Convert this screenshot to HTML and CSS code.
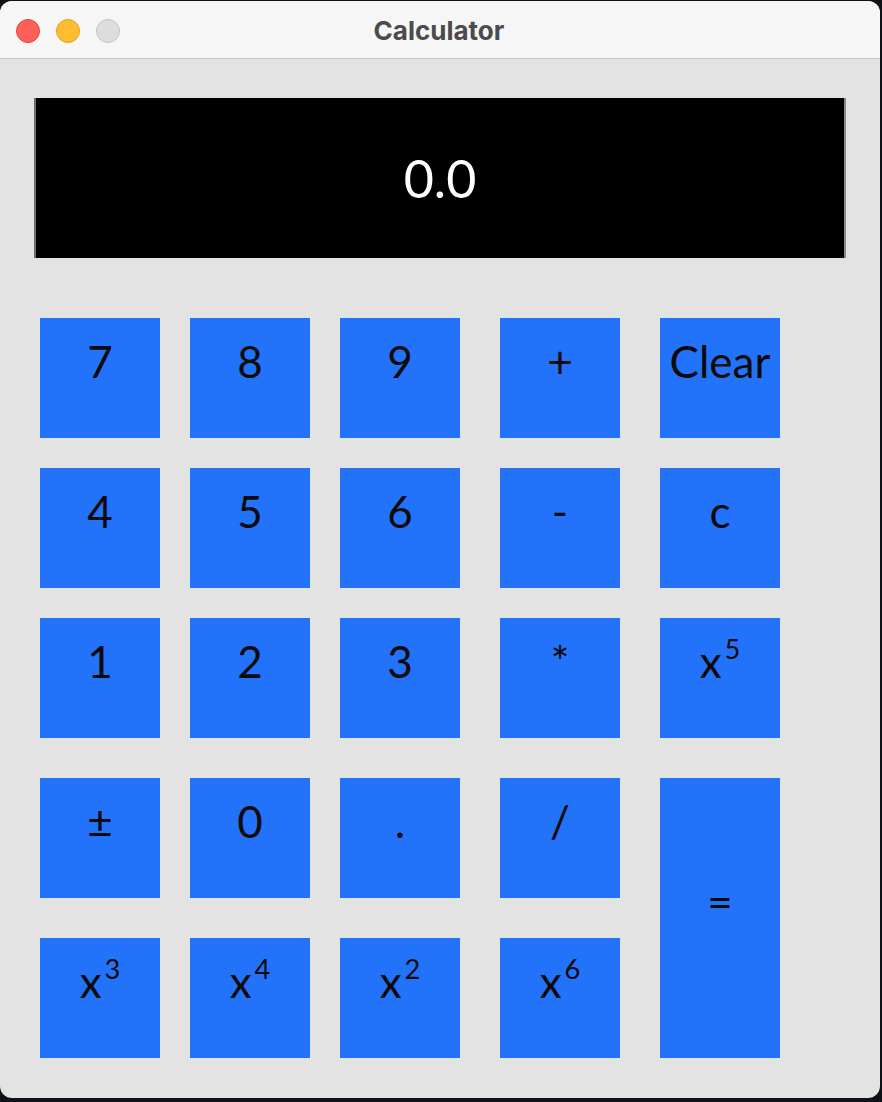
FILE: index.html
```html
<!DOCTYPE html>
<html lang="en">

<head>
  <meta charset="UTF-8">
  <meta name="viewport" content="width=device-width, initial-scale=1.0">
  <title>Calculator</title>
  <link rel="stylesheet" href="styles.css">
</head>

<body>
  <div class="window">

    <div class="titlebar">
      <div class="lights">
        <span class="light red"></span>
        <span class="light yellow"></span>
        <span class="light gray"></span>
      </div>
      <div class="title">Calculator</div>
      <div></div>
    </div>

    <div class="content">
      <div class="display" id="display">0.0</div>

      <div class="keys">
        <button class="key">7</button>
        <button class="key">8</button>
        <button class="key">9</button>
        <button class="key">+</button>
        <button class="key">Clear</button>

        <button class="key">4</button>
        <button class="key">5</button>
        <button class="key">6</button>
        <button class="key">-</button>
        <button class="key">c</button>

        <button class="key">1</button>
        <button class="key">2</button>
        <button class="key">3</button>
        <button class="key">*</button>
        <button class="key">x<sup>5</sup></button>

        <button class="key">±</button>
        <button class="key">0</button>
        <button class="key">.</button>
        <button class="key">/</button>
        <button class="key equals">=</button>

        <button class="key">x<sup>3</sup></button>
        <button class="key">x<sup>4</sup></button>
        <button class="key">x<sup>2</sup></button>
        <button class="key">x<sup>6</sup></button>
      </div>
    </div>

  </div>
</body>

</html>
```

FILE: styles.css
```css
* {
  margin: 0;
  padding: 0;
  box-sizing: border-box;
}

body {
  background: #0e1115;
  font-family: Lato, "Noto Sans", sans-serif;
}

.window {
  width: 880px;
  height: 1097px;
  margin-top: 1px;
  background: #e3e3e3;
  border-radius: 12px;
  overflow: hidden;
}

/* title bar */
.titlebar {
  height: 58px;
  padding-top: 2px;
  background: #f6f6f6;
  border-bottom: 1px solid #c8c8c8;
  display: grid;
  grid-template-columns: 1fr auto 1fr;
  align-items: center;
}

.lights {
  display: flex;
  gap: 16px;
  padding-left: 16px;
}

.light {
  width: 24px;
  height: 24px;
  border-radius: 50%;
}

.red {
  background: #fe5f57;
  border: 1px solid #e2463f;
}

.yellow {
  background: #febc2e;
  border: 1px solid #dfa123;
}

.gray {
  background: #dddddd;
  border: 1px solid #c5c5c5;
}

.title {
  font-family: Inter, "Liberation Sans", sans-serif;
  font-weight: 700;
  font-size: 26px;
  color: #4b4b4b;
  margin-left: -2px;
}

/* body of the calculator */
.content {
  padding: 39px 0 0 34px;
}

.display {
  width: 812px;
  height: 160px;
  background: #000;
  border-left: 2px solid #6e6e6e;
  border-right: 2px solid #8a8a8a;
  color: #fff;
  font-size: 52px;
  display: flex;
  justify-content: center;
  align-items: center;
}

.keys {
  margin: 60px 0 0 6px;
  display: grid;
  grid-template-columns: repeat(3, 120px) 130px 130px;
  grid-template-rows: repeat(3, 120px) 130px 130px;
  gap: 30px;
}

/* buttons centre their line box on their own */
.key {
  width: 120px;
  height: 120px;
  justify-self: end;
  align-self: end;
  border: none;
  background: #2372fa;
  color: #0b0b0b;
  font-family: Lato, "Noto Sans", sans-serif;
  font-size: 44px;
  line-height: 1.2;
  padding-bottom: 34px;
  text-align: center;
  cursor: pointer;
}

.key sup {
  font-size: 0.62em;
  line-height: 1;
  vertical-align: 0.7em;
  margin-left: 3px;
}

.equals {
  grid-column: 5;
  grid-row: 4 / span 2;
  height: 280px;
}
```
